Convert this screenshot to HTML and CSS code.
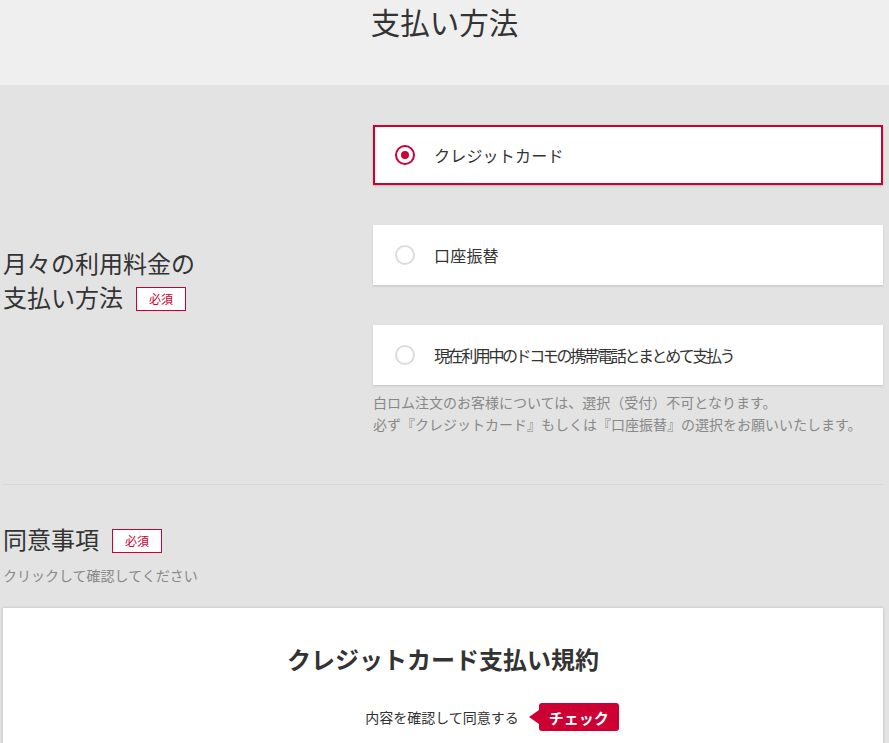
FILE: index.html
```html
<!DOCTYPE html>
<html lang="ja">
<head>
<meta charset="utf-8">
<title>支払い方法</title>
<link rel="stylesheet" href="styles.css">
</head>
<body>
<header class="page-head">
  <h1 class="page-title">支払い方法</h1>
</header>
<main class="page">
  <section class="pay-section">
    <div class="pay-row">
      <div class="field-label">
        <span>月々の利用料金の</span><br>
        <span>支払い方法</span><span class="req">必須</span>
      </div>
      <div class="options">
        <label class="option is-selected">
          <span class="radio"></span>
          <span class="option-text">クレジットカード</span>
        </label>
        <label class="option">
          <span class="radio"></span>
          <span class="option-text">口座振替</span>
        </label>
        <label class="option">
          <span class="radio"></span>
          <span class="option-text tight">現在利用中のドコモの携帯電話とまとめて支払う</span>
        </label>
        <p class="note">白ロム注文のお客様については、選択（受付）不可となります。<br>必ず『クレジットカード』もしくは『口座振替』の選択をお願いいたします。</p>
      </div>
    </div>
  </section>
  <section class="agree-section">
    <h2 class="agree-title">同意事項<span class="req req-2">必須</span></h2>
    <p class="agree-sub">クリックして確認してください</p>
    <div class="terms-card">
      <h3 class="terms-title">クレジットカード支払い規約</h3>
      <div class="terms-check">
        <span class="terms-check-text">内容を確認して同意する</span>
        <span class="check-badge">チェック</span>
      </div>
    </div>
  </section>
</main>
</body>
</html>
```
FILE: styles.css
```css
* { box-sizing: border-box; }
html, body {
  margin: 0;
  padding: 0;
  overflow: hidden;
}
body {
  font-family: "Noto Sans CJK JP", "Noto Sans", "Liberation Sans", sans-serif;
  color: #333;
  background: #e3e3e3;
}
.page-head {
  background: #efefef;
  height: 85px;
  padding-top: 1px;
}
.page-title {
  margin: 0;
  text-align: center;
  font-size: 29.5px;
  font-weight: 400;
  line-height: 40px;
  color: #333;
}
.page {
  padding-left: 3px;
  width: 883px;
}
.pay-section {
  padding: 40px 0 49px;
  border-bottom: 1px solid #d6d6d6;
}
.pay-row {
  display: flex;
  align-items: center;
}
.field-label {
  width: 370px;
  flex: none;
  font-size: 24px;
  line-height: 34px;
  color: #333;
}
.req {
  display: inline-flex;
  align-items: center;
  justify-content: center;
  width: 50px;
  height: 24px;
  margin-left: 13px;
  background: #fff;
  border: 1px solid #cc0033;
  color: #cc0033;
  font-size: 12px;
  line-height: 1;
  vertical-align: 3px;
}
.options {
  flex: 1;
  display: flex;
  flex-direction: column;
  gap: 40px;
}
.option {
  display: flex;
  align-items: center;
  height: 60px;
  padding-left: 20px;
  background: #fff;
  border: 2px solid transparent;
  box-shadow: 0 1px 2px rgba(0, 0, 0, 0.15);
}
.option.is-selected {
  border-color: #cc0033;
  box-shadow: 0 1px 2px rgba(0, 0, 0, 0.2);
}
.radio {
  flex: none;
  position: relative;
  width: 20px;
  height: 20px;
  border-radius: 50%;
  border: 2px solid #dcdcdc;
  margin-right: 19px;
}
.is-selected .radio {
  border-color: #cc0033;
}
.is-selected .radio::after {
  content: "";
  position: absolute;
  left: 4px;
  top: 4px;
  width: 8px;
  height: 8px;
  border-radius: 50%;
  background: #cc0033;
}
.option-text {
  font-size: 16px;
  color: #333;
  letter-spacing: 0.2px;
}
.option-text.tight {
  letter-spacing: -2.4px;
}
.note {
  margin: -34px 0 0;
  font-size: 14px;
  line-height: 22px;
  color: #888;
}
.agree-section {
  padding-top: 37px;
}
.agree-title {
  margin: 0;
  font-size: 24px;
  font-weight: 400;
  line-height: 34px;
  color: #333;
}
.req-2 {
  margin-left: 13px;
}
.agree-sub {
  margin: 8px 0 0;
  font-size: 14px;
  line-height: 22px;
  color: #888;
}
.terms-card {
  margin-top: 22px;
  background: #fff;
  box-shadow: 0 0 3px rgba(0, 0, 0, 0.2);
  padding-top: 34px;
  height: 200px;
  text-align: center;
}
.terms-title {
  margin: 0;
  font-size: 24px;
  font-weight: 700;
  line-height: 34px;
  color: #333;
}
.terms-check {
  margin-top: 27px;
  display: flex;
  justify-content: center;
  align-items: center;
  gap: 20px;
  padding-left: 98px;
}
.terms-check-text {
  font-size: 14px;
  color: #333;
}
.check-badge {
  position: relative;
  display: inline-flex;
  align-items: center;
  height: 28px;
  padding: 0 10px;
  background: #cc0033;
  color: #fff;
  font-size: 15px;
  font-weight: 700;
  border-radius: 3px;
}
.check-badge::before {
  content: "";
  position: absolute;
  left: -10px;
  top: 7px;
  border-style: solid;
  border-width: 7px 10px 7px 0;
  border-color: transparent #cc0033 transparent transparent;
}
```
